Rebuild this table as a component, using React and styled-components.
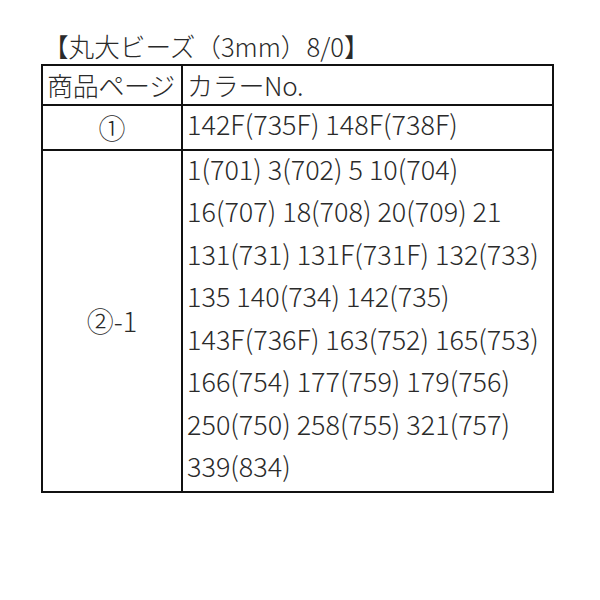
import React from 'react'
import styled, { createGlobalStyle } from 'styled-components'

const GlobalStyle = createGlobalStyle`
  body {
    margin: 0;
    background: #fff;
    font-family: "Noto Sans CJK JP", "Noto Sans", sans-serif;
    font-weight: 300;
    color: #2a2a2a;
  }
`

const rows = [
  { page: '①', colors: ['142F(735F) 148F(738F)'] },
  {
    page: '②-1',
    colors: [
      '1(701) 3(702) 5 10(704)',
      '16(707) 18(708) 20(709) 21',
      '131(731) 131F(731F) 132(733)',
      '135 140(734) 142(735)',
      '143F(736F) 163(752) 165(753)',
      '166(754) 177(759) 179(756)',
      '250(750) 258(755) 321(757)',
      '339(834)',
    ],
  },
]

const App = () => {
  return (
    <Page>
      <GlobalStyle />
      <Title>【丸大ビーズ（3mm）8/0】</Title>
      <Table>
        <thead>
          <tr>
            <HeadCell>商品ページ</HeadCell>
            <HeadCell>カラーNo.</HeadCell>
          </tr>
        </thead>
        <tbody>
          {rows.map((row) => (
            <tr key={row.page}>
              <PageCell>{row.page}</PageCell>
              <ColorCell>
                {row.colors.map((line) => (
                  <ColorLine key={line}>{line}</ColorLine>
                ))}
              </ColorCell>
            </tr>
          ))}
        </tbody>
      </Table>
    </Page>
  )
}

const Page = styled.div`
  padding: 28px 0 0 41px;
`

const Title = styled.div`
  font-size: 25.6px;
  line-height: 36px;
  padding-left: 2px;
`

const Table = styled.table`
  border-collapse: collapse;
  width: 513px;
  table-layout: fixed;
  font-size: 26px;
`

const HeadCell = styled.th`
  font-weight: 300;
  border: 2px solid #111;
  height: 38px;
  padding: 0 0 0 4px;
  text-align: left;
  white-space: nowrap;
  line-height: 38px;
  letter-spacing: -0.3px;
  &:first-child {
    width: 134px;
  }
`

const PageCell = styled.td`
  border: 2px solid #111;
  text-align: center;
  vertical-align: middle;
  padding: 0;
  font-size: 27px;
`

const ColorCell = styled.td`
  border: 2px solid #111;
  padding: 0 0 3px 4px;
  vertical-align: top;
  font-size: 27px;
`

const ColorLine = styled.div`
  line-height: 42.5px;
  white-space: nowrap;
  &:first-child {
    margin-top: -3px;
  }
`

export default App
